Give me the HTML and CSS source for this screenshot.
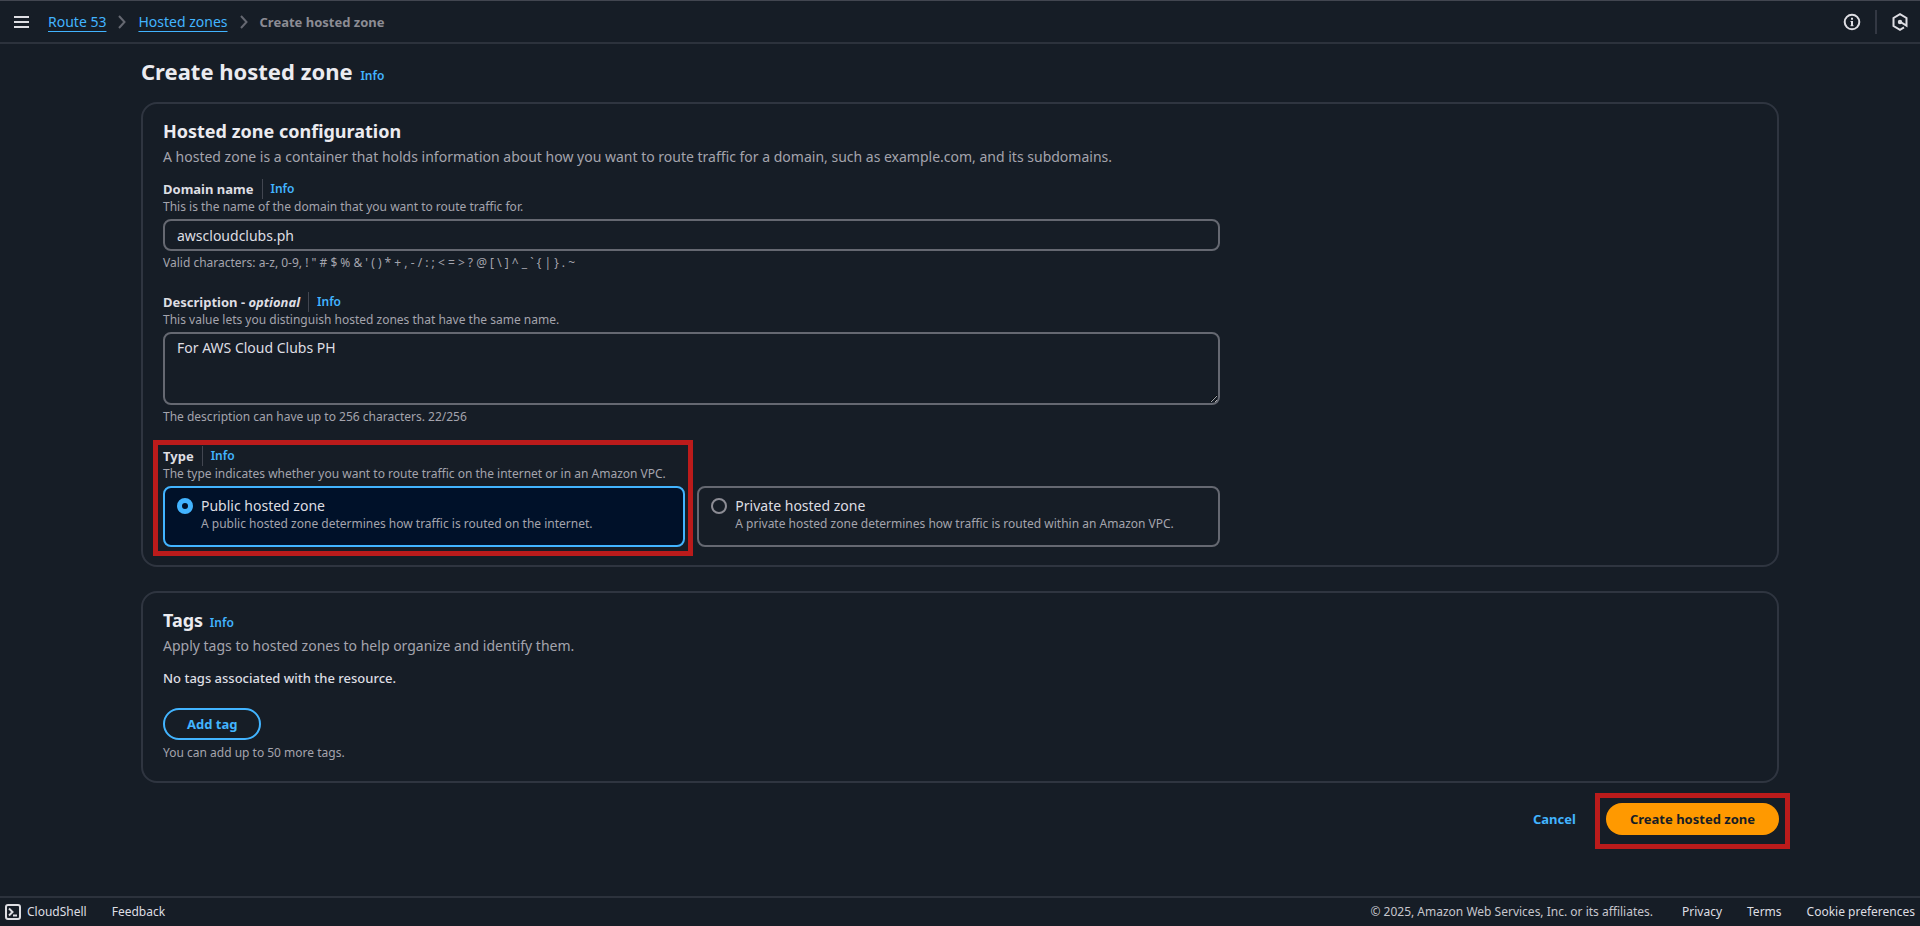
FILE: index.html
```html
<!DOCTYPE html>
<html lang="en">
<head>
    <meta charset="utf-8">
    <title>Create hosted zone | Route 53</title>
    <link rel="stylesheet" href="styles.css">
</head>
<body>
    <header class="topbar">
        <button type="button" class="icon-button" aria-label="Open navigation">
            <svg width="16" height="16" viewBox="0 0 16 16" fill="none" stroke="currentColor" stroke-width="2">
                <path d="M0 3h15M0 8h15M0 13h15"/>
            </svg>
        </button>
        <nav class="breadcrumbs" aria-label="Breadcrumbs">
            <a href="#">Route 53</a>
            <svg class="chevron" width="8" height="14" viewBox="0 0 8 14" fill="none" stroke="currentColor" stroke-width="2">
                <path d="M1 1l5.500 6L1 13"/>
            </svg>
            <a href="#">Hosted zones</a>
            <svg class="chevron" width="8" height="14" viewBox="0 0 8 14" fill="none" stroke="currentColor" stroke-width="2">
                <path d="M1 1l5.500 6L1 13"/>
            </svg>
            <span class="current">Create hosted zone</span>
        </nav>
        <div class="topbar-tools">
            <button type="button" class="icon-button" aria-label="Help panel">
                <svg width="18" height="18" viewBox="0 0 18 18" fill="none" stroke="currentColor" stroke-width="2">
                    <circle cx="9" cy="9" r="7.300"/>
                    <path d="M9 8v5M9 4.800v2" />
                    <path d="M7.500 8.500H9M7.500 12.700h3" stroke-width="1"/>
                </svg>
            </button>
            <span class="separator"></span>
            <button type="button" class="icon-button" aria-label="Amazon Q">
                <svg width="18" height="18" viewBox="0 0 18 18" fill="none" stroke="currentColor" stroke-width="2">
                    <path d="M13 14.400L9 16.800l-6.500-3.800V5L9 1.200 15.500 5v7.700L9.500 9"/>
                    <circle cx="9" cy="9" r="1.200" fill="currentColor"/>
                </svg>
            </button>
        </div>
    </header>

    <main class="content">
        <h1>Create hosted zone <a href="#" class="info">Info</a></h1>

        <form id="zone-form">
            <section class="card">
                <h2>Hosted zone configuration</h2>
                <p class="card-text">A hosted zone is a container that holds information about how you want to route traffic for a domain, such as example.com, and its subdomains.</p>

                <div class="fields">
                    <div class="field">
                        <div class="field-label">
                            <label for="domain-name">Domain name</label>
                            <a href="#" class="info">Info</a>
                        </div>
                        <p class="hint">This is the name of the domain that you want to route traffic for.</p>
                        <input type="text" id="domain-name" class="control" value="awscloudclubs.ph">
                        <p class="hint">Valid characters: a-z, 0-9, ! " # $ % &amp; ' ( ) * + , - / : ; &lt; = &gt; ? @ [ \ ] ^ _ ` { | } . ~</p>
                    </div>

                    <div class="field">
                        <div class="field-label">
                            <label for="description">Description - <em>optional</em></label>
                            <a href="#" class="info">Info</a>
                        </div>
                        <p class="hint">This value lets you distinguish hosted zones that have the same name.</p>
                        <textarea id="description" class="control" rows="3">For AWS Cloud Clubs PH</textarea>
                        <p class="hint">The description can have up to 256 characters. 22/256</p>
                    </div>

                    <div class="field" role="radiogroup" aria-labelledby="type-label">
                        <div class="field-label">
                            <span id="type-label">Type</span>
                            <a href="#" class="info">Info</a>
                        </div>
                        <p class="hint">The type indicates whether you want to route traffic on the internet or in an Amazon VPC.</p>
                        <div class="tiles">
                            <label class="tile" for="type-public">
                                <input type="radio" id="type-public" name="type" checked>
                                <span class="tile-title">Public hosted zone</span>
                                <span class="tile-text">A public hosted zone determines how traffic is routed on the internet.</span>
                            </label>
                            <label class="tile" for="type-private">
                                <input type="radio" id="type-private" name="type">
                                <span class="tile-title">Private hosted zone</span>
                                <span class="tile-text">A private hosted zone determines how traffic is routed within an Amazon VPC.</span>
                            </label>
                        </div>
                        <div class="highlight highlight-type"></div>
                    </div>
                </div>
            </section>

            <section class="card">
                <h2>Tags <a href="#" class="info">Info</a></h2>
                <p class="card-text">Apply tags to hosted zones to help organize and identify them.</p>
                <p class="empty">No tags associated with the resource.</p>
                <button type="button" class="button button-normal">Add tag</button>
                <p class="hint">You can add up to 50 more tags.</p>
            </section>

            <div class="actions">
                <button type="button" class="button button-link">Cancel</button>
                <div class="submit">
                    <button type="submit" class="button button-primary">Create hosted zone</button>
                    <div class="highlight highlight-submit"></div>
                </div>
            </div>
        </form>
    </main>

    <footer class="footer">
        <button type="button" class="footer-button">
            <svg width="16" height="16" viewBox="0 0 16 16" fill="none" stroke="currentColor" stroke-width="2">
                <rect x="1" y="1" width="14" height="14" rx="2"/>
                <path d="M4 4.500L7.500 8 4 11.500M8 11.500h4"/>
            </svg>
            CloudShell
        </button>
        <button type="button" class="footer-button">Feedback</button>
        <span class="copyright">© 2025, Amazon Web Services, Inc. or its affiliates.</span>
        <a href="#">Privacy</a>
        <a href="#">Terms</a>
        <a href="#">Cookie preferences</a>
    </footer>
</body>
</html>
```
FILE: styles.css
```css
* {
    box-sizing: border-box;
}

body {
    margin: 0;
    min-height: 100vh;
    display: flex;
    flex-direction: column;
    font-family: "Noto Sans", sans-serif;
    font-size: 14px;
    line-height: 20px;
    color: #dedee3;
    background-color: #161d26;
}

h1, h2, p {
    margin: 0;
}

a {
    color: #42b4ff;
}

button, input, textarea {
    font: inherit;
    color: inherit;
}

button {
    padding: 0;
    border: none;
    background: none;
    cursor: pointer;
}

svg {
    display: block;
    flex: none;
}

/* Top bar */
.topbar {
    display: flex;
    align-items: center;
    height: 44px;
    padding: 0 11px 0 14px;
    border-top: 1px solid #424650;
    border-bottom: 2px solid #2c323c;
}

.breadcrumbs {
    display: flex;
    align-items: center;
    gap: 12px;
    margin-left: 18px;
}

.breadcrumbs a {
    text-underline-offset: 4px;
}

.chevron {
    color: #656871;
}

.current {
    font-size: 13px;
    font-weight: 700;
    color: #8c8c94;
}

.topbar-tools {
    display: flex;
    align-items: center;
    gap: 14px;
    margin-left: auto;
}

.separator {
    width: 2px;
    height: 24px;
    background-color: #333843;
}

/* Page content */
.content {
    flex: 1;
    width: 100%;
    padding: 12px 141px 40px;
}

h1 {
    margin-bottom: 16px;
    font-size: 22px;
    line-height: 30px;
    color: #ebebf0;
}

h2 {
    margin-bottom: 4px;
    font-size: 18px;
    line-height: 24px;
    color: #ebebf0;
}

.info {
    font-size: 12px;
    font-weight: 600;
    line-height: 16px;
    text-decoration: none;
}

h1 .info,
h2 .info {
    margin-left: 2px;
}

.card {
    padding: 15px 20px 18px;
    margin-bottom: 24px;
    border: 2px solid #2f3540;
    border-radius: 16px;
}

.card-text {
    margin-bottom: 12px;
    color: #a4a4ad;
}

.fields {
    display: flex;
    flex-direction: column;
    gap: 21px;
    width: calc(66.666% - 6px);
}

.field {
    position: relative;
}

.field-label {
    display: flex;
    align-items: center;
    font-size: 13px;
    font-weight: 700;
}

.field-label .info {
    padding: 2px 0 2px 8px;
    margin-left: 8px;
    border-left: 1px solid #424650;
}

.hint {
    font-size: 12px;
    line-height: 16px;
    color: #a4a4ad;
}

.control {
    display: block;
    width: 100%;
    height: 32px;
    padding: 4px 12px;
    margin: 4px 0;
    border: 2px solid #656871;
    border-radius: 8px;
    background-color: #161d26;
}

textarea.control {
    height: 73px;
}

.tiles {
    display: grid;
    grid-template-columns: 1fr 1fr;
    gap: 12px;
    margin-top: 4px;
}

.tile {
    display: grid;
    grid-template-columns: 16px 1fr;
    column-gap: 8px;
    padding: 8px 12px 13px;
    border: 2px solid #656871;
    border-radius: 8px;
    cursor: pointer;
}

.tile:has(input:checked) {
    border-color: #42b4ff;
    background-color: #001129;
}

.tile input {
    appearance: none;
    align-self: center;
    width: 16px;
    height: 16px;
    margin: 0;
    border: 2px solid #8c8c94;
    border-radius: 50%;
}

.tile input:checked {
    border: 5px solid #42b4ff;
}

.tile-text {
    grid-column: 2;
    font-size: 12px;
    line-height: 16px;
    color: #a4a4ad;
}

/* Red frames over the parts to look at */
.highlight {
    position: absolute;
    border: 5px solid #bb1b1b;
    pointer-events: none;
}

.highlight-type {
    top: -6px;
    right: calc(50% - 2px);
    bottom: -9px;
    left: -10px;
}

.highlight-submit {
    top: -10px;
    right: -11px;
    bottom: -14px;
    left: -11px;
}

/* Buttons */
.button {
    display: block;
    height: 32px;
    padding: 0 20px;
    border: 2px solid transparent;
    border-radius: 16px;
    font-size: 13px;
    font-weight: 700;
}

.button-normal {
    padding: 0 22px;
    border-color: #42b4ff;
    color: #42b4ff;
}

.button-link {
    color: #42b4ff;
}

.button-primary {
    padding: 0 22px;
    background-color: #ff9900;
    color: #161d26;
}

.empty {
    margin-bottom: 20px;
    font-size: 13px;
    font-weight: 500;
}

.button-normal + .hint {
    margin: 5px 0 2px;
}

.actions {
    display: flex;
    justify-content: flex-end;
    gap: 8px;
    margin-top: -4px;
}

.submit {
    position: relative;
}

/* Footer */
.footer {
    display: flex;
    align-items: center;
    gap: 25px;
    height: 30px;
    padding: 0 5px;
    border-top: 2px solid #2c323c;
    font-size: 12px;
}

.footer-button {
    display: flex;
    align-items: center;
    gap: 6px;
}

.copyright {
    margin-left: auto;
    margin-right: 4px;
    color: #c6c6cd;
}

.footer a {
    color: #dedee3;
    text-decoration: none;
}
```
